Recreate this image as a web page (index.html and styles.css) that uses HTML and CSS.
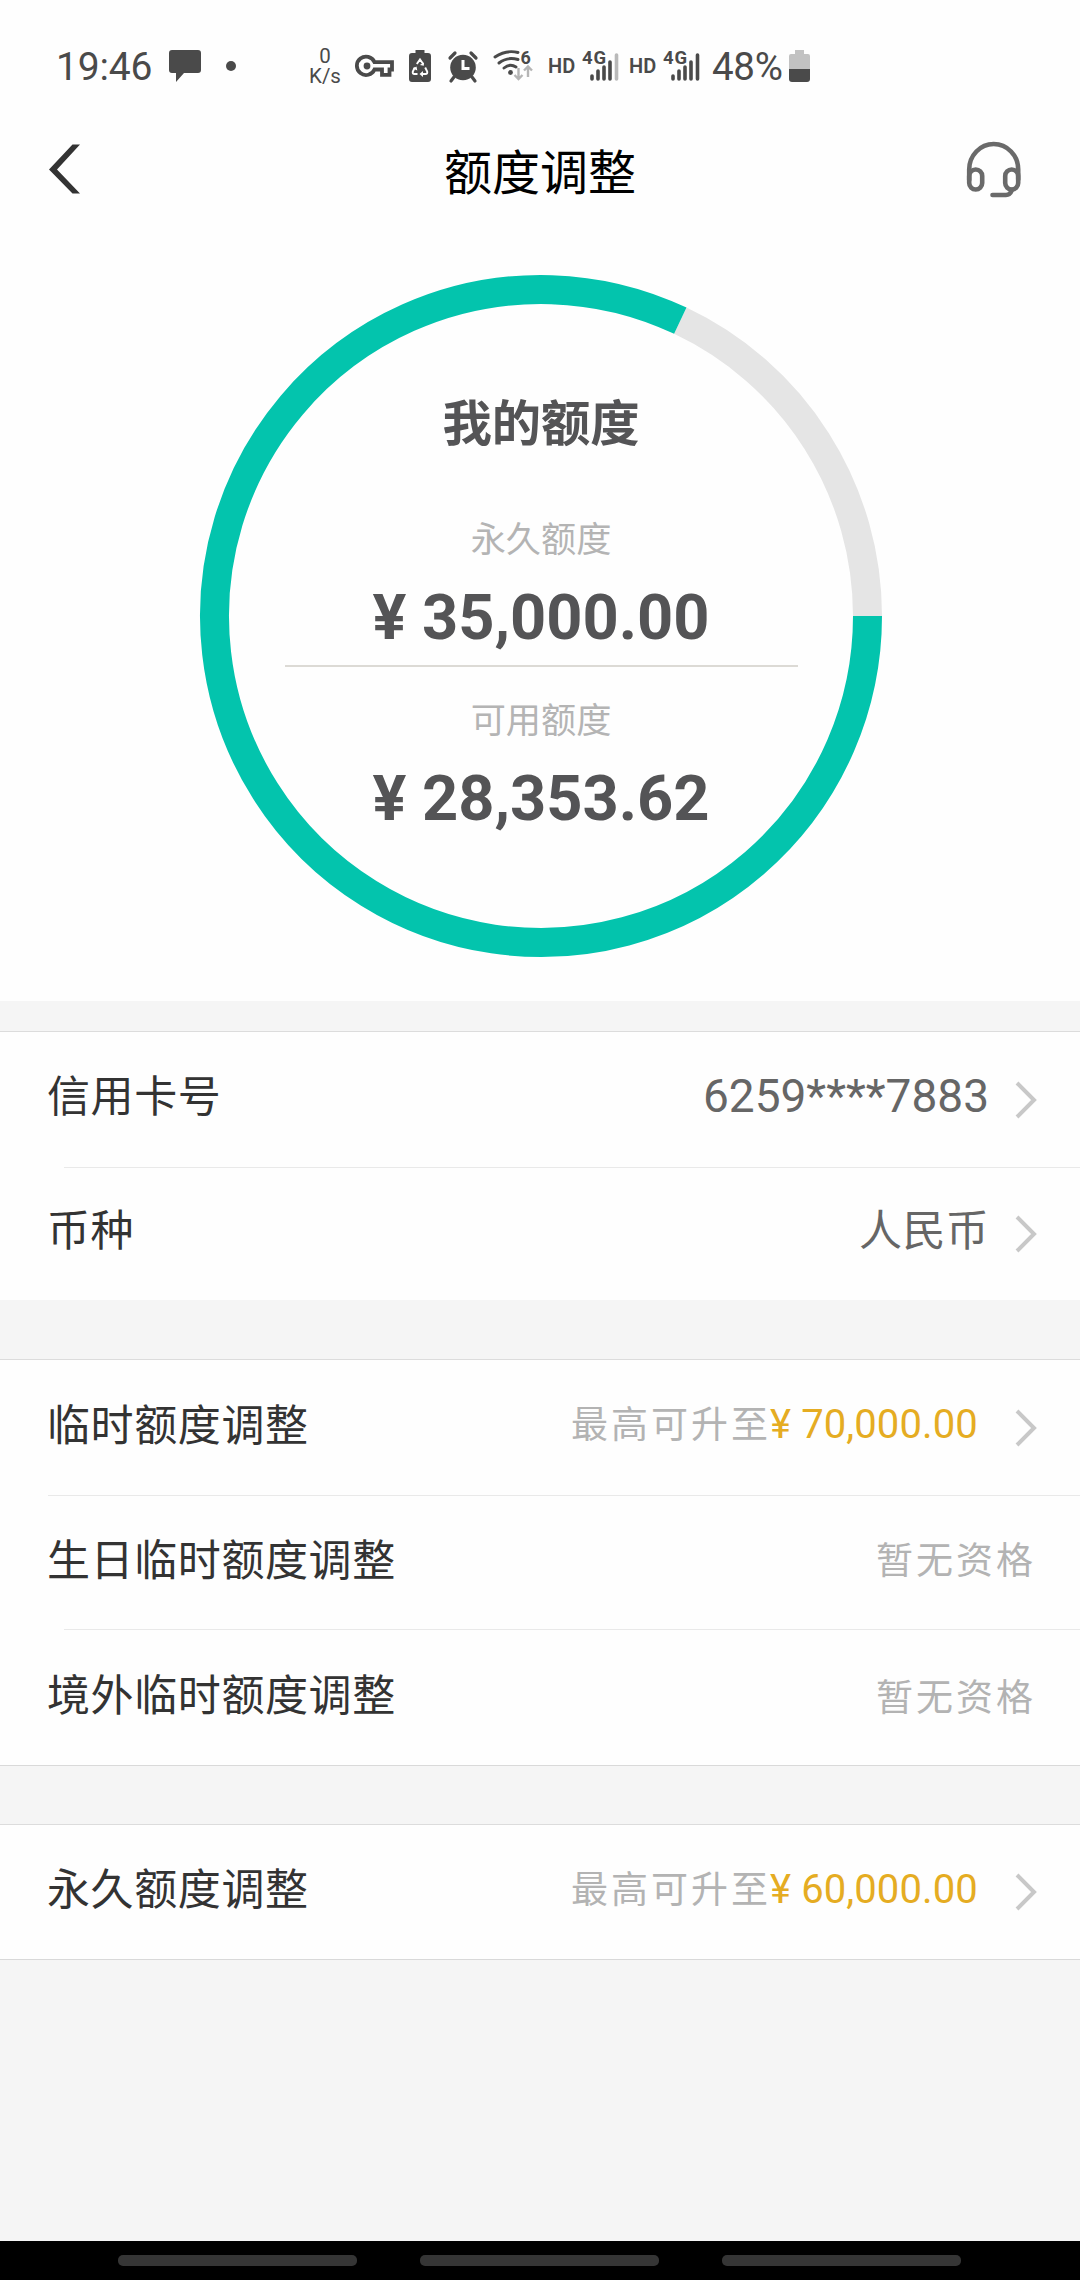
FILE: index.html
```html
<!DOCTYPE html>
<html lang="zh-CN">
<head>
<meta charset="utf-8">
<title>额度调整</title>
<link rel="stylesheet" href="styles.css">
</head>
<body>
<div class="screen">
  <header class="status">
    <span class="clock">19:46</span>
    <svg class="bubble" width="34" height="34" viewBox="0 0 34 34"><path d="M4 1h26q3 0 3 3v17q0 3-3 3H16L8 33V24H4q-3 0-3-3V4q0-3 3-3z"/></svg>
    <span class="dot"></span>
    <span class="speed"><span>0</span><span>K/s</span></span>
    <svg class="key" width="38" height="24" viewBox="0 0 38 24"><path d="M18.500 8.200H36v7.300h-2.500v5.300h-7.500v-5.300h-7.500A9.200 9.200 0 1 1 18.500 8.200z" fill="none" stroke="#4a4a4a" stroke-width="3.800"/><circle cx="11" cy="12" r="3.400"/></svg>
    <svg class="saver" width="22" height="32" viewBox="0 0 22 32"><path d="M6.500 0h9v3H19q3 0 3 3v23q0 3-3 3H3q-3 0-3-3V6q0-3 3-3h3.500z"/><path d="M7.800 14 11 9.500l3.200 4.500M16.200 17.500l2 4q.5 2.500-1.700 2.500h-3M8.500 24h-3q-2.200 0-1.700-2.500l2-4" fill="none" stroke="#fff" stroke-width="1.900"/><path d="m14.800 15.800-4-.8 4.200-2.500zM14 21v6l-3.500-3zM4 18.500l3.500-2 .8 4z" fill="#fff"/></svg>
    <svg class="alarm" width="30" height="31" viewBox="0 0 30 31"><circle cx="15" cy="16.500" r="12.800"/><path d="m2 7 5-5M23 2l5 5M6 26l-3 4M24 26l3 4" fill="none" stroke="#4a4a4a" stroke-width="3.200" stroke-linecap="round"/><path d="M15 9v8.500h6.500" fill="none" stroke="#fff" stroke-width="3"/></svg>
    <svg class="wifi" width="40" height="34" viewBox="0 0 40 34"><g fill="none" stroke="#4a4a4a" stroke-width="2.900" stroke-linecap="round"><path d="M2 8Q13 .5 25 3.500"/><path d="M6 14Q14 7.500 25 10.500"/><path d="M11 19Q17 14 23 18"/></g><circle cx="17.500" cy="23.500" r="2.400"/><text x="27.500" y="14.500" font-size="18" font-weight="700">6</text><path d="M25.500 19v10M21.500 26l4 4 4-4M35 28V18M31 21.500l4-4 4 4" fill="none" stroke="#b5b5b5" stroke-width="2.400"/></svg>
    <span class="hd hd-first">HD</span>
    <svg class="signal" width="38" height="36" viewBox="0 -1 38 36"><text x="0" y="14.500" font-size="18.500" font-weight="700" textLength="24">4G</text><g fill="none" stroke="#4a4a4a" stroke-width="3.600" stroke-linecap="round"><path d="M10 27v3M16 22v8M22 18v12M28 13v17"/><path class="faint" d="M34.500 6v24"/></g></svg>
    <span class="hd">HD</span>
    <svg class="signal" width="38" height="36" viewBox="0 -1 38 36"><text x="0" y="14.500" font-size="18.500" font-weight="700" textLength="24">4G</text><path d="M10 27v3M16 22v8M22 18v12M28 13v17M34.500 6v24" fill="none" stroke="#4a4a4a" stroke-width="3.600" stroke-linecap="round"/></svg>
    <span class="percent">48%</span>
    <svg class="battery" width="21" height="32" viewBox="0 0 21 32"><path d="M6 0h9v4h4q2 0 2 2v13H0V6q0-2 2-2h4z" fill="#c2c2c2"/><path d="M0 19h21v10q0 3-3 3H3q-3 0-3-3z"/></svg>
  </header>

  <nav class="titlebar">
    <svg class="back" width="36" height="54" viewBox="0 0 36 54"><path d="M26.500 2.500H34L11 27.500 34 51.500H26.500L3 27.500z" fill="#333"/></svg>
    <h1 class="title">额度调整</h1>
    <svg class="headset" width="56" height="58" viewBox="0 0 56 58"><g fill="none" stroke="#6a6a6a" stroke-width="4.600" stroke-linecap="round"><path d="M4.200 38V27.500a24.500 25.500 0 0 1 49 0v10"/><rect x="4.200" y="27.500" width="13" height="20" rx="6.500"/><rect x="40.200" y="27.500" width="13" height="20" rx="6.500"/><path d="M47 48q-2 5-6 5H27.500"/></g></svg>
  </nav>

  <main>
    <section class="quota">
      <div class="gauge">
        <svg class="ring" width="682" height="682" viewBox="-341 -341 682 682" fill="none" stroke-width="29"><path d="M326.500 0A326.500 326.500 0 0 0 139.300-295.300" stroke="#e5e5e5"/><path d="M326.500 0A326.500 326.500 0 1 1 139.300-295.300" stroke="#03c4ad"/></svg>
        <div class="figures">
          <h2 class="heading">我的额度</h2>
          <p class="caption">永久额度</p>
          <p class="amount">¥ 35,000.00</p>
          <hr class="split">
          <p class="caption">可用额度</p>
          <p class="amount">¥ 28,353.62</p>
        </div>
      </div>
    </section>

    <section class="group card-group">
      <div class="row"><span class="label">信用卡号</span><span class="value number">6259****7883</span><svg class="chevron" viewBox="0 0 22 38"><path d="m2 2 17 17L2 36"/></svg></div>
      <div class="row inset"><span class="label">币种</span><span class="value">人民币</span><svg class="chevron" viewBox="0 0 22 38"><path d="m2 2 17 17L2 36"/></svg></div>
    </section>

    <section class="group temp-group">
      <div class="row"><span class="label">临时额度调整</span><span class="offer">最高可升至<b class="gold">¥ 70,000.00</b></span><svg class="chevron" viewBox="0 0 22 38"><path d="m2 2 17 17L2 36"/></svg></div>
      <div class="row edge"><span class="label">生日临时额度调整</span><span class="none">暂无资格</span></div>
      <div class="row inset"><span class="label">境外临时额度调整</span><span class="none low">暂无资格</span></div>
    </section>

    <section class="group fixed-group">
      <div class="row"><span class="label">永久额度调整</span><span class="offer">最高可升至<b class="gold">¥ 60,000.00</b></span><svg class="chevron" viewBox="0 0 22 38"><path d="m2 2 17 17L2 36"/></svg></div>
    </section>
  </main>

  <footer class="gestures"><i></i><i></i><i></i></footer>
</div>
</body>
</html>
```
FILE: styles.css
```css
* { box-sizing: border-box; margin: 0; padding: 0; }

body {
  font-family: Roboto, "Noto Sans CJK SC", sans-serif;
  line-height: 1;
  background: #f5f5f5;
}

svg { display: block; flex: none; overflow: visible; }

.screen {
  display: flex;
  flex-direction: column;
  width: 1080px;
  height: 2280px;
  overflow: hidden;
}

main { flex: 1; }

/* Status bar */
.status {
  display: flex;
  align-items: center;
  height: 132px;
  padding-left: 56px;
  background: #fefefe;
  color: #4a4a4a;
  fill: #4a4a4a;
  white-space: nowrap;
}

.clock { width: 99px; padding-top: 3px; font-size: 39px; letter-spacing: -0.2px; }
.bubble { margin-left: 13px; }
.dot { width: 10px; height: 10px; margin-left: 24px; border-radius: 50%; background: #4a4a4a; }
.speed { display: flex; flex-direction: column; align-items: center; width: 34px; margin-left: 72px; padding-top: 1px; font-size: 20.500px; line-height: 19.500px; }
.key { margin-left: 14px; }
.saver { margin-left: 15px; }
.alarm { margin-left: 17px; }
.wifi { margin-left: 15px; }
.hd { width: 27px; margin-left: 9px; font-size: 20px; font-weight: 600; }
.hd-first { margin-left: 15px; }
.signal { margin-left: 7px; }
.faint { stroke: #b9b9b9; }
.percent { width: 76px; margin-left: 11px; padding-top: 2px; font-size: 38.500px; letter-spacing: -0.3px; }
.battery { margin-left: 1px; }

/* Title bar */
.titlebar {
  display: flex;
  align-items: flex-start;
  justify-content: space-between;
  height: 118px;
  padding: 10px 59px 0 46px;
  background: #fefefe;
}

.title { margin: 8px 0 0 33px; font-size: 48px; font-weight: 400; color: #000; line-height: 48px; }

/* Quota ring */
.quota { height: 751px; padding: 25px 0 0 200px; background: #fefefe; }
.gauge { display: grid; width: 682px; height: 682px; }
.ring, .figures { grid-area: 1 / 1; }
.figures { padding: 124px 0 0; text-align: center; color: #545456; }
.heading { font-size: 49.300px; font-weight: 700; line-height: 50px; }
.caption { margin-top: 71px; font-size: 35.200px; line-height: 40px; color: #b4b4b4; }
.amount { margin-top: 34px; font-size: 63.200px; font-weight: 700; line-height: 46px; white-space: pre; }
.split { width: 513px; height: 2px; margin: 25px auto 0; border: 0; background: #dcdad5; }
.split + .caption { margin-top: 34px; }

/* List groups */
.group { background: #fefefe; border-top: 1px solid #dcdcdc; }
.card-group { margin-top: 30px; }
.temp-group, .fixed-group { margin-top: 59px; border-bottom: 1px solid #d9d9d9; }
.fixed-group { margin-top: 58px; }

.row { display: flex; align-items: center; height: 134px; padding: 0 43px 0 47px; }
.card-group .row:first-child { height: 135px; }
.card-group .row:last-child { height: 133px; }
.temp-group .row { height: 135px; }
.temp-group .row:nth-child(2) { height: 134px; }
.temp-group .row:last-child { height: 136px; }
.inset, .edge { background: linear-gradient(#e9e9e9, #e9e9e9) 64px 0 / 100% 1px no-repeat; }
.edge { background-position: 48px 0; }

.label { flex: 1; padding-bottom: 4px; font-size: 43px; letter-spacing: 0.6px; color: #333; }
.temp-group .label { padding-bottom: 2px; }
.value { padding-bottom: 5px; font-size: 43px; letter-spacing: 0.3px; color: #666; }
.number { padding-bottom: 7px; font-size: 46px; letter-spacing: 0; }
.offer { display: flex; align-items: center; padding-bottom: 4px; font-size: 37px; letter-spacing: 3px; color: #b3b3b3; }
.gold { width: 210px; margin-left: -1px; padding-bottom: 1px; font-size: 40px; font-weight: 400; letter-spacing: 0.100px; color: #e5ac22; white-space: pre; }
.none { margin-right: 1px; padding-bottom: 1px; font-size: 37px; letter-spacing: 3px; color: #b3b3b3; }
.low { padding: 2px 0 0; }

.chevron { width: 22px; height: 38px; margin-left: 26px; fill: none; stroke: #c8c8c8; stroke-width: 4px; }
.offer + .chevron { margin-left: 35px; }

/* System gesture bar */
.gestures { display: flex; gap: 63px; height: 39px; padding: 14px 0 0 118px; background: #000; }
.gestures i { width: 239px; height: 11px; border-radius: 5px; background: #353535; }
```
